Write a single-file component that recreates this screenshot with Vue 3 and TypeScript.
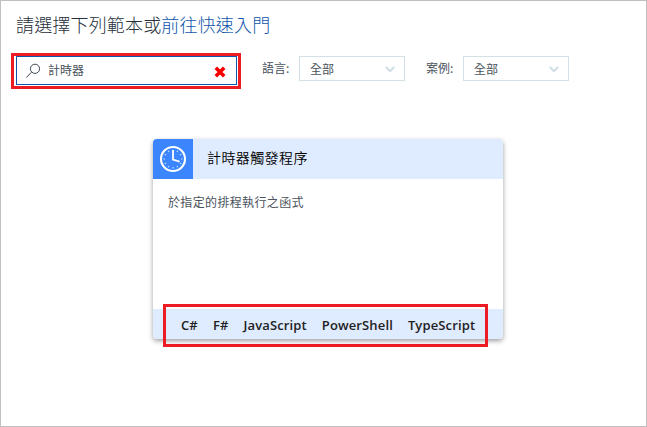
<script setup lang="ts">
import { ref } from 'vue'

interface Filter {
  label: string
  value: string
}

const query = ref('計時器')
const filters: Filter[] = [
  { label: '語言:', value: '全部' },
  { label: '案例:', value: '全部' },
]
const languages: string[] = ['C#', 'F#', 'JavaScript', 'PowerShell', 'TypeScript']
const ticks: number[] = [30, 60, 90, 120, 150, 180, 210, 240, 270, 300, 330]
</script>

<template>
  <main class="page">
    <h1 class="title">請選擇下列範本或<a class="link">前往快速入門</a></h1>

    <div class="toolbar">
      <div class="highlight">
        <div class="search">
          <svg class="magnifier" width="16" height="16" viewBox="0 0 16 16">
            <circle cx="10" cy="5.8" r="4.6" />
            <path d="M6.6 9.2 1.2 14.6" />
          </svg>
          <span class="query">{{ query }}</span>
          <svg class="clear" width="12" height="12" viewBox="0 0 12 12">
            <path d="M1.8 1.8 10.2 10.2M10.2 1.8 1.8 10.2" />
          </svg>
        </div>
      </div>
      <div v-for="f in filters" :key="f.label" class="filter">
        <span class="label">{{ f.label }}</span>
        <div class="select">
          <span>{{ f.value }}</span>
          <svg width="10" height="7" viewBox="0 0 10 7">
            <path d="M0.8 1 5 5.2 9.2 1" />
          </svg>
        </div>
      </div>
    </div>

    <section class="card">
      <header class="head">
        <div class="icon">
          <svg width="28" height="28" viewBox="0 0 28 28">
            <circle class="rim" cx="14" cy="14" r="12" />
            <path
              v-for="t in ticks"
              :key="t"
              class="tick"
              d="M14 4.4V6"
              :transform="`rotate(${t} 14 14)`"
            />
            <path class="hands" d="M14 5V14.6L20.6 16.6" />
          </svg>
        </div>
        <h2 class="name">計時器觸發程序</h2>
      </header>
      <p class="description">於指定的排程執行之函式</p>
      <footer class="foot">
        <span v-for="l in languages" :key="l">{{ l }}</span>
        <div class="foot-highlight"></div>
      </footer>
    </section>
  </main>
</template>

<style>
body {
  margin: 0;
}
</style>

<style scoped>
.page {
  box-sizing: border-box;
  width: 647px;
  height: 427px;
  border: 1px solid #c0c0c0;
  background: #fff;
  overflow: hidden;
  font-family: 'Noto Sans CJK TC', sans-serif;
  font-weight: 400;
  color: #4a525c;
}

.title {
  margin: 10px 0 0 15px;
  font-size: 18px;
  line-height: 26px;
  font-weight: 300;
  letter-spacing: 0.17px;
  color: #27303b;
}

.link {
  color: #0f55ab;
}

.toolbar {
  display: flex;
  align-items: flex-start;
  margin: 16px 0 0 10px;
}

.highlight {
  box-sizing: border-box;
  width: 230px;
  height: 36px;
  border: 3px solid #ed1c24;
  padding: 0 1px 1px 2px;
}

.search {
  box-sizing: border-box;
  height: 29px;
  border: 1px solid #0f55ab;
  display: flex;
  align-items: center;
  padding: 0 10px 0 8px;
  font-size: 12px;
}

.magnifier {
  fill: none;
  stroke: #414a54;
  stroke-width: 1;
}

.query {
  flex: 1;
  margin: -2px 0 0 7px;
  line-height: 18px;
}

.clear {
  margin-top: 3px;
  stroke: #f60000;
  stroke-width: 3.6;
}

.filter {
  display: flex;
  margin: 3px 0 0 21px;
  font-size: 12px;
}

.label {
  width: 37px;
  line-height: 24px;
  white-space: nowrap;
}

.select {
  box-sizing: border-box;
  width: 106px;
  height: 25px;
  border: 1px solid #d3e0e6;
  display: flex;
  align-items: center;
  justify-content: space-between;
  padding: 0 9px 0 10px;
}

.select svg {
  margin-top: 2px;
  fill: none;
  stroke: #cfdee5;
  stroke-width: 2;
}

.card {
  display: flex;
  flex-direction: column;
  width: 350px;
  height: 200px;
  margin: 50px 0 0 152px;
  border-radius: 4px;
  background: #fff;
  box-shadow: 0 2px 5px rgba(0, 0, 0, 0.38);
}

.head {
  display: flex;
  align-items: center;
  height: 40px;
  border-radius: 4px 4px 0 0;
  background: #dfebfe;
  overflow: hidden;
}

.icon {
  display: flex;
  align-items: center;
  justify-content: center;
  width: 40px;
  height: 40px;
  background: #3b86ff;
}

.icon svg {
  fill: none;
  stroke: #fff;
}

.rim {
  stroke-width: 2.1;
}

.tick {
  stroke-width: 1.2;
  opacity: 0.7;
}

.hands {
  stroke-width: 1.8;
}

.name {
  margin: 0 0 4px 14px;
  font-size: 14px;
  font-weight: 350;
  letter-spacing: 0.4px;
  color: #000;
}

.description {
  flex: 1;
  margin: 0;
  padding: 14px 15px 0;
  font-size: 12px;
  line-height: 18px;
  letter-spacing: 0.35px;
}

.foot {
  position: relative;
  display: flex;
  align-items: center;
  gap: 15px;
  height: 30px;
  padding: 2px 0 0 28px;
  box-sizing: border-box;
  border-radius: 0 0 4px 4px;
  background: #dfebfe;
  font-family: 'Open Sans', sans-serif;
  font-size: 13px;
  font-weight: 600;
  letter-spacing: 0.13px;
  color: #222;
}

.foot-highlight {
  position: absolute;
  box-sizing: border-box;
  left: 10px;
  top: -5px;
  width: 325px;
  height: 43px;
  border: 3px solid #ed1c24;
}
</style>
